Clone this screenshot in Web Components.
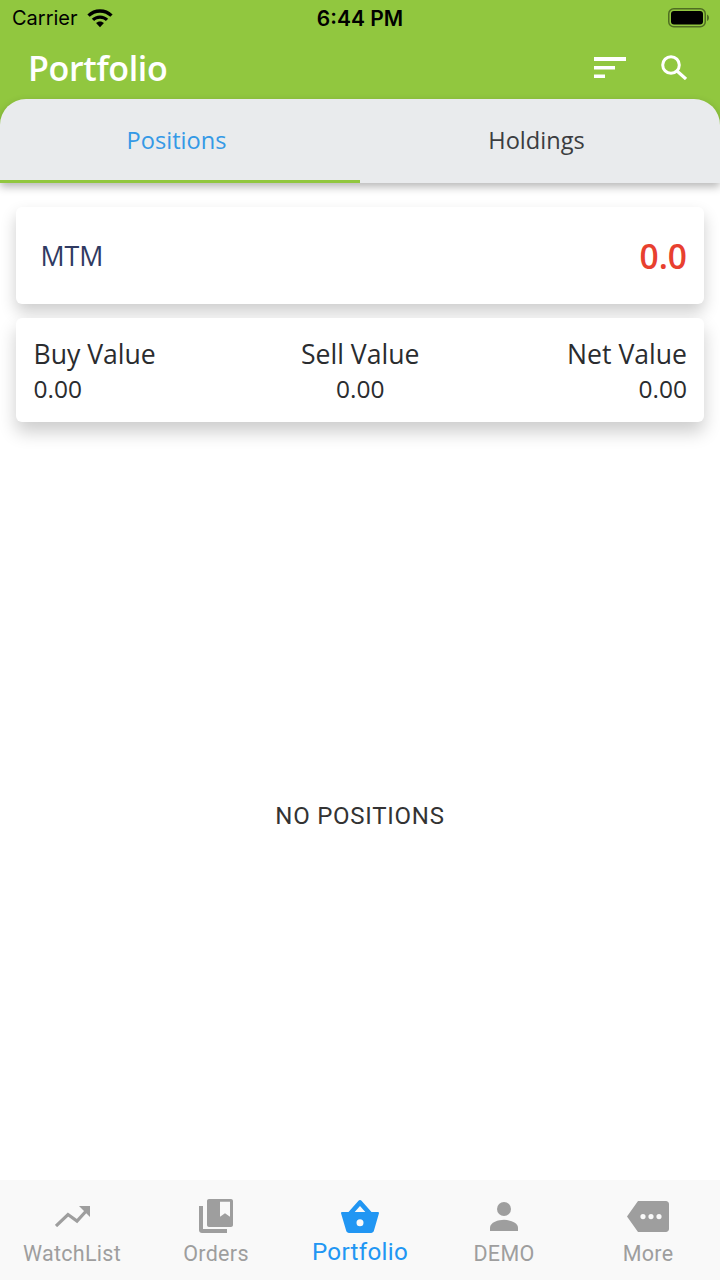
<!DOCTYPE html>
<html lang="en">

<head>
    <meta charset="UTF-8">
    <meta name="viewport" content="width=device-width, initial-scale=1.0">
    <title>Portfolio</title>
    <style>
        html, body { margin: 0; padding: 0; height: 100%; background: #fff; }
        body { width: 720px; height: 1280px; overflow: hidden; display: flex; flex-direction: column; font-family: "Open Sans", sans-serif; }
    </style>
</head>

<body>
    <status-bar></status-bar>
    <app-bar title="Portfolio"></app-bar>
    <tab-strip></tab-strip>
    <mtm-card label="MTM" value="0.0"></mtm-card>
    <value-card></value-card>
    <empty-state>NO POSITIONS</empty-state>
    <bottom-nav></bottom-nav>

    <script>
        // Status bar ...............................................................

        class StatusBar extends HTMLElement {
            constructor() {
                super();
                const shadow = this.attachShadow({ mode: 'open' });
                shadow.innerHTML = `
                    <style>
                        :host { display: flex; flex: none; height: 36px; align-items: center; padding: 0 10px 0 12px; background: #91c73f; color: #000; font-family: Inter, "Liberation Sans", sans-serif; }
                        .left { flex: 1; display: flex; align-items: center; gap: 9px; font-size: 20px; }
                        .time { font-size: 21px; font-weight: 600; margin-right: 2px; }
                        .right { flex: 1; display: flex; justify-content: flex-end; }
                        svg { display: block; }
                    </style>
                    <div class="left">
                        <span>Carrier</span>
                        <svg width="26" height="19" viewBox="0 0 27 19">
                            <path d="M13.5 0C8.4 0 3.8 2 .4 5.3l2.4 2.5C5.6 5.100 9.400 3.500 13.500 3.500s7.900 1.600 10.700 4.300l2.400-2.500C23.200 2 18.600 0 13.500 0z"/>
                            <path d="M13.500 6.300c-3.300 0-6.300 1.300-8.500 3.400l2.400 2.500c1.600-1.500 3.800-2.400 6.100-2.400s4.500.9 6.100 2.400l2.400-2.500c-2.200-2.100-5.200-3.400-8.500-3.400z"/>
                            <path d="M13.500 12.600c-1.600 0-3 .6-4.100 1.600l4.100 4.300 4.100-4.300c-1.100-1-2.500-1.600-4.100-1.600z"/>
                        </svg>
                    </div>
                    <div class="time">6:44 PM</div>
                    <div class="right">
                        <svg width="42" height="20" viewBox="0 0 42 20">
                            <rect x="0.750" y="0.750" width="36.500" height="18" rx="5" fill="none" stroke="#000" stroke-opacity=".45" stroke-width="1.500"/>
                            <rect x="3" y="3" width="32" height="13.500" rx="3"/>
                            <path d="M39 6.500c1.200.4 2 1.700 2 3.250s-.8 2.850-2 3.250z" fill="#000" fill-opacity=".45"/>
                        </svg>
                    </div>
                `;
            }
        }

        customElements.define('status-bar', StatusBar);

        // App bar ...............................................................

        class AppBar extends HTMLElement {
            constructor() {
                super();
                const shadow = this.attachShadow({ mode: 'open' });
                shadow.innerHTML = `
                    <style>
                        :host { display: flex; flex: none; height: 63px; align-items: center; padding: 0 33px 0 28px; background: #91c73f; color: #fff; }
                        h1 { flex: 1; margin: 0; font: 600 34px/46px "Open Sans", sans-serif; letter-spacing: -.35px; }
                        .actions { display: flex; align-items: center; gap: 35px; }
                        svg { display: block; fill: #fff; }
                    </style>
                    <h1></h1>
                    <div class="actions">
                        <svg width="32" height="21" viewBox="0 0 32 21">
                            <rect x="0" y="0" width="32" height="4"/>
                            <rect x="0" y="9" width="21" height="3.500"/>
                            <rect x="0" y="17.500" width="11" height="3.500"/>
                        </svg>
                        <svg width="26" height="25" viewBox="0 0 26 25">
                            <circle cx="10" cy="10" r="8.300" fill="none" stroke="#fff" stroke-width="3"/>
                            <path d="M16 16l9 8" stroke="#fff" stroke-width="3.200" fill="none"/>
                        </svg>
                    </div>
                `;
                shadow.querySelector('h1').textContent = this.getAttribute('title');
            }
        }

        customElements.define('app-bar', AppBar);

        // Tabs ...............................................................

        class TabStrip extends HTMLElement {
            constructor() {
                super();
                const shadow = this.attachShadow({ mode: 'open' });
                shadow.innerHTML = `
                    <style>
                        :host { display: block; flex: none; background: linear-gradient(#91c73f 50%, transparent 50%); }
                        .wrap { border-radius: 26px 26px 0 0; box-shadow: 0 4px 8px rgba(0,0,0,.28); }
                        .tabs { display: flex; height: 84px; border-radius: 26px 26px 0 0; background: #e9ebed; overflow: hidden; }
                        .tab { flex: 1; box-sizing: border-box; padding-right: 7px; display: flex; align-items: center; justify-content: center; border-bottom: 3px solid transparent; font-size: 23.600px; color: #3b3d40; }
                        .tab.active { color: #3499e6; border-bottom-color: #91c73f; }
                    </style>
                    <div class="wrap">
                        <div class="tabs">
                            <div class="tab active">Positions</div>
                            <div class="tab">Holdings</div>
                        </div>
                    </div>
                `;
            }
        }

        customElements.define('tab-strip', TabStrip);

        // Cards ...............................................................

        class MtmCard extends HTMLElement {
            constructor() {
                super();
                const shadow = this.attachShadow({ mode: 'open' });
                shadow.innerHTML = `
                    <style>
                        :host { display: flex; flex: none; height: 97px; box-sizing: border-box; margin: 24px 16px 0; padding: 0 17px 0 24.500px; align-items: center; justify-content: space-between; border-radius: 6px; background: #fff; box-shadow: 0 8px 16px rgba(0,0,0,.2); position: relative; }
                        .label { font-size: 26.800px; color: #2f3a62; }
                        .value { font-size: 33.500px; font-weight: 600; color: #e8402f; }
                    </style>
                    <span class="label"></span>
                    <span class="value"></span>
                `;
                shadow.querySelector('.label').textContent = this.getAttribute('label');
                shadow.querySelector('.value').textContent = this.getAttribute('value');
            }
        }

        customElements.define('mtm-card', MtmCard);

        class ValueCard extends HTMLElement {
            constructor() {
                super();
                const shadow = this.attachShadow({ mode: 'open' });
                const cols = [['Buy Value', 'start'], ['Sell Value', 'center'], ['Net Value', 'end']];
                shadow.innerHTML = `
                    <style>
                        :host { display: grid; flex: none; grid-template-columns: 1fr 1fr 1fr; height: 104px; box-sizing: border-box; margin: 14px 16px 0; padding: 19px 17px 0 17.500px; border-radius: 6px; background: #fff; box-shadow: 0 10px 18px rgba(0,0,0,.2); position: relative; color: #2a2c2f; }
                        .col { display: flex; flex-direction: column; }
                        .start { text-align: left; } .center { text-align: center; } .end { text-align: right; }
                        .k { font-size: 26.600px; line-height: 34px; }
                        .v { font-size: 24.500px; line-height: 35px; }
                    </style>
                    ${cols.map(([k, cls]) => `<div class="col ${cls}"><span class="k">${k}</span><span class="v">0.00</span></div>`).join('')}
                `;
            }
        }

        customElements.define('value-card', ValueCard);

        class EmptyState extends HTMLElement {
            constructor() {
                super();
                const shadow = this.attachShadow({ mode: 'open' });
                shadow.innerHTML = `
                    <style>
                        :host { display: flex; flex: 1; align-items: center; justify-content: center; padding-top: 30px; font: 24px "Roboto", sans-serif; letter-spacing: .75px; color: #333; }
                    </style>
                    <slot></slot>
                `;
            }
        }

        customElements.define('empty-state', EmptyState);

        // Bottom navigation ...............................................................

        const NAV_ICONS = {
            watch: `<svg width="35" height="21" viewBox="0 0 35 21"><path d="M1 20l12-11.500 9 6.500 11-12" fill="none" stroke="currentColor" stroke-width="3.200"/><path d="M24 0h11v11z" fill="currentColor"/></svg>`,
            orders: `<svg width="34" height="34" viewBox="0 0 34 34"><path d="M0 7h4v23h24v4H3c-1.700 0-3-1.300-3-3z" fill="currentColor"/><path fill-rule="evenodd" d="M10 0h22c1.100 0 2 .9 2 2v24c0 1.100-.9 2-2 2H10c-1.100 0-2-.9-2-2V2c0-1.100.9-2 2-2zm11 2.700v15l5-3.500 5 3.500v-15z" fill="currentColor"/></svg>`,
            basket: `<svg width="38" height="33" viewBox="0 0 38 33"><path fill-rule="evenodd" d="M19 0c.6 0 1.100.3 1.500.8L30.500 12h6.300c.9 0 1.400.7 1.100 1.500l-5 17.300c-.4 1.300-1.500 2.200-2.800 2.200H8c-1.300 0-2.400-.9-2.800-2.200L.1 13.500C-.2 12.700.3 12 1.200 12h6.300L17.500.8c.4-.5.9-.8 1.500-.8zm0 6l-5.300 6h10.600zm0 13.200a3.500 3.500 0 1 0 0 7 3.500 3.500 0 0 0 0-7z" fill="currentColor"/></svg>`,
            person: `<svg width="28" height="29" viewBox="0 0 28 29"><circle cx="14" cy="7" r="7" fill="currentColor"/><path d="M0 29v-3.500C0 20.500 8.500 17.800 14 17.800s14 2.700 14 7.700V29z" fill="currentColor"/></svg>`,
            more: `<svg width="42" height="31" viewBox="0 0 42 31"><path fill-rule="evenodd" d="M11 0h28c1.600 0 3 1.400 3 3v25c0 1.600-1.400 3-3 3H11L0 15.500zM16 13a2.600 2.600 0 1 0 0 5.200 2.600 2.600 0 0 0 0-5.200zm8 0a2.600 2.600 0 1 0 0 5.200 2.600 2.600 0 0 0 0-5.200zm8 0a2.600 2.600 0 1 0 0 5.200 2.600 2.600 0 0 0 0-5.200z" fill="currentColor"/></svg>`
        };

        class NavItem extends HTMLElement {
            constructor() {
                super();
                const shadow = this.attachShadow({ mode: 'open' });
                const active = this.hasAttribute('active');
                shadow.innerHTML = `
                    <style>
                        :host { display: flex; flex: 1; flex-direction: column; align-items: center; color: ${active ? '#2196f3' : '#9e9e9e'}; font: ${active ? 24.200 : 21.500}px "Roboto", sans-serif; letter-spacing: .3px; }
                        .icon { height: 38px; display: flex; align-items: center; justify-content: center; }
                        .label { line-height: 28px; margin-top: ${active ? 3 : 5}px; }
                        svg { display: block; }
                    </style>
                    <div class="icon">${NAV_ICONS[this.getAttribute('icon')]}</div>
                    <div class="label"><slot></slot></div>
                `;
            }
        }

        customElements.define('nav-item', NavItem);

        class BottomNav extends HTMLElement {
            constructor() {
                super();
                const shadow = this.attachShadow({ mode: 'open' });
                shadow.innerHTML = `
                    <style>
                        :host { display: flex; flex: none; height: 100px; box-sizing: border-box; padding-top: 17px; background: #f9f9f9; }
                    </style>
                    <nav-item icon="watch">WatchList</nav-item>
                    <nav-item icon="orders">Orders</nav-item>
                    <nav-item icon="basket" active>Portfolio</nav-item>
                    <nav-item icon="person">DEMO</nav-item>
                    <nav-item icon="more">More</nav-item>
                `;
            }
        }

        customElements.define('bottom-nav', BottomNav);
    </script>
</body>

</html>
